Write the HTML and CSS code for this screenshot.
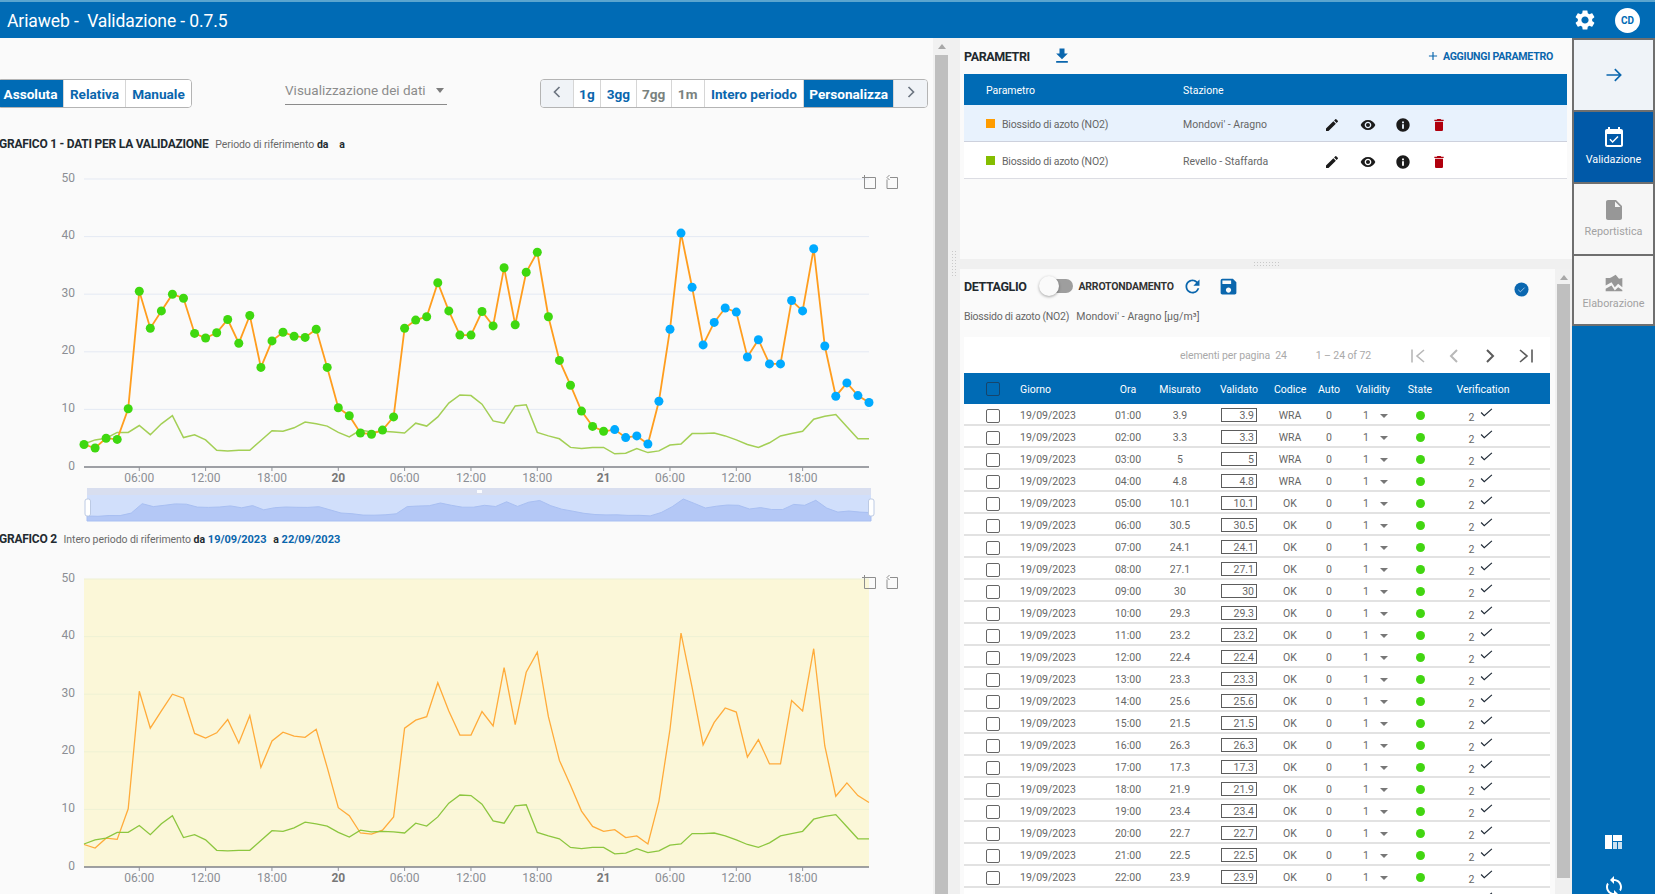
FILE: index.html
```html
<!DOCTYPE html>
<html lang="it">
<head>
<meta charset="utf-8">
<title>Ariaweb - Validazione</title>
<link rel="stylesheet" href="styles.css">
</head>
<body>
<svg class="sprite" aria-hidden="true">
  <symbol id="i-gear" viewBox="0 0 24 24"><path d="M19.14 12.94c.04-.3.06-.61.06-.94 0-.32-.02-.64-.07-.94l2.03-1.58c.18-.14.23-.41.12-.61l-1.92-3.32c-.12-.22-.37-.29-.59-.22l-2.39.96c-.5-.38-1.03-.7-1.62-.94l-.36-2.54c-.04-.24-.24-.41-.48-.41h-3.84c-.24 0-.43.17-.47.41l-.36 2.54c-.59.24-1.13.57-1.62.94l-2.39-.96c-.22-.08-.47 0-.59.22L2.74 8.87c-.12.21-.08.47.12.61l2.03 1.58c-.05.3-.09.63-.09.94s.02.64.07.94l-2.03 1.58c-.18.14-.23.41-.12.61l1.92 3.32c.12.22.37.29.59.22l2.39-.96c.5.38 1.03.7 1.62.94l.36 2.54c.05.24.24.41.48.41h3.84c.24 0 .44-.17.47-.41l.36-2.54c.59-.24 1.13-.56 1.62-.94l2.39.96c.22.08.47 0 .59-.22l1.92-3.32c.12-.22.07-.47-.12-.61l-2.01-1.58zM12 15.6c-1.98 0-3.6-1.62-3.6-3.6s1.62-3.6 3.6-3.6 3.6 1.62 3.6 3.6-1.62 3.6-3.6 3.6z"/></symbol>
  <symbol id="i-edit" viewBox="0 0 24 24"><path d="M3 17.25V21h3.75L17.81 9.94l-3.75-3.75L3 17.25zM20.71 7.04a1 1 0 0 0 0-1.41l-2.34-2.34a1 1 0 0 0-1.41 0l-1.83 1.83 3.75 3.75 1.83-1.83z"/></symbol>
  <symbol id="i-eye" viewBox="0 0 24 24"><path d="M12 4.5C7 4.5 2.73 7.61 1 12c1.73 4.39 6 7.5 11 7.5s9.27-3.11 11-7.5c-1.73-4.39-6-7.5-11-7.5zM12 17c-2.76 0-5-2.24-5-5s2.24-5 5-5 5 2.24 5 5-2.24 5-5 5zm0-8c-1.66 0-3 1.34-3 3s1.34 3 3 3 3-1.34 3-3-1.34-3-3-3z"/></symbol>
  <symbol id="i-info" viewBox="0 0 24 24"><path d="M12 2C6.48 2 2 6.48 2 12s4.48 10 10 10 10-4.48 10-10S17.52 2 12 2zm1.4 15.5h-2.8v-6.6h2.8v6.6zm0-8.2h-2.8V6.6h2.8v2.7z"/></symbol>
  <symbol id="i-trash" viewBox="0 0 24 24"><path d="M6 19c0 1.1.9 2 2 2h8c1.1 0 2-.9 2-2V7H6v12zM19 4h-3.5l-1-1h-5l-1 1H5v2h14V4z"/></symbol>
  <symbol id="i-download" viewBox="0 0 24 24"><path d="M19 9h-4V3H9v6H5l7 7 7-7zM5 18v2h14v-2H5z"/></symbol>
  <symbol id="i-add" viewBox="0 0 24 24"><path d="M19 13h-6v6h-2v-6H5v-2h6V5h2v6h6v2z"/></symbol>
  <symbol id="i-arrow" viewBox="0 0 24 24"><path d="M3 12h17M13 5l7 7-7 7" fill="none" stroke="currentColor" stroke-width="2"/></symbol>
  <symbol id="i-event" viewBox="0 0 24 24"><path d="M16.53 11.06L15.47 10l-4.88 4.88-2.12-2.12-1.06 1.06L10.59 17l5.94-5.94zM19 3h-1V1h-2v2H8V1H6v2H5c-1.11 0-1.99.9-1.99 2L3 19c0 1.1.89 2 2 2h14c1.1 0 2-.9 2-2V5c0-1.1-.9-2-2-2zm0 16H5V8h14v11z"/></symbol>
  <symbol id="i-doc" viewBox="0 0 24 24"><path d="M6 2c-1.1 0-1.99.9-1.99 2L4 20c0 1.1.89 2 2 2h12c1.1 0 2-.9 2-2V8l-6-6H6zm7 7V3.5L18.5 9H13z"/></symbol>
  <symbol id="i-area" viewBox="0 0 24 24"><path d="M2 6h5l2-1 5-3 4 5 4-1v11l-5-4-4 4-4-6-7 4zM2 19l7-4 4 6 4-4 5 3.500V22H2z"/></symbol>
  <symbol id="i-refresh" viewBox="0 0 24 24"><path d="M17.65 6.35A7.958 7.958 0 0 0 12 4c-4.42 0-7.99 3.58-7.99 8s3.57 8 7.99 8c3.73 0 6.84-2.55 7.73-6h-2.08A5.99 5.99 0 0 1 12 18c-3.31 0-6-2.69-6-6s2.69-6 6-6c1.66 0 3.14.69 4.22 1.78L13 11h7V4l-2.35 2.35z"/></symbol>
  <symbol id="i-save" viewBox="0 0 24 24"><path d="M17 3H5a2 2 0 0 0-2 2v14c0 1.1.9 2 2 2h14c1.100 0 2-.9 2-2V7l-4-4zm-5 16c-1.660 0-3-1.340-3-3s1.340-3 3-3 3 1.340 3 3-1.340 3-3 3zm3-10H5V5h10v4z"/></symbol>
  <symbol id="i-verified" viewBox="0 0 16 16"><circle cx="8" cy="8" r="7.500" fill="#0a67b0"/><path d="M4.500 8.300l2.300 2.200 4.500-4.500" fill="none" stroke="#9fc5e6" stroke-width="1"/></symbol>
  <symbol id="i-left" viewBox="0 0 12 16"><path d="M9 2L3 8l6 6" fill="none" stroke="currentColor" stroke-width="2"/></symbol>
  <symbol id="i-right" viewBox="0 0 12 16"><path d="M3 2l6 6-6 6" fill="none" stroke="currentColor" stroke-width="2"/></symbol>
  <symbol id="i-first" viewBox="0 0 16 16"><path d="M2 1.500v13M14 2L7 8l7 6" fill="none" stroke="currentColor" stroke-width="1.600"/></symbol>
  <symbol id="i-last" viewBox="0 0 16 16"><path d="M14 1.500v13M2 2l7 6-7 6" fill="none" stroke="currentColor" stroke-width="1.600"/></symbol>
  <symbol id="i-quilt" viewBox="0 0 17 14"><path d="M0 0h7v14H0zM8 0h9v6H8z"/><path d="M8 7h4v7H8zM13 7h4v7h-4z" opacity=".8"/></symbol>
  <symbol id="i-sync" viewBox="0 0 24 24"><path d="M12 4V1L8 5l4 4V6c3.310 0 6 2.690 6 6 0 1.010-.25 1.970-.7 2.800l1.460 1.460A7.930 7.930 0 0 0 20 12c0-4.420-3.580-8-8-8zm0 14c-3.310 0-6-2.690-6-6 0-1.010.25-1.970.7-2.800L5.240 7.740A7.930 7.930 0 0 0 4 12c0 4.420 3.580 8 8 8v3l4-4-4-4v3z"/></symbol>
  <symbol id="i-check" viewBox="0 0 14 10"><path d="M1 5l3.500 3.500L13 1" fill="none" stroke="#1f2a36" stroke-width="1.300"/></symbol>
</svg>

<div class="app">
  <header class="topbar">
    <div class="brand">Ariaweb -&nbsp; Validazione - 0.7.5</div>
    <div class="top-actions">
      <svg class="gear"><use href="#i-gear"/></svg>
      <div class="avatar">CD</div>
    </div>
  </header>

  <div class="workspace">
    <main class="charts-pane">
      <div class="toolbar">
        <div class="seg seg-mode">
          <button class="seg-btn is-active mode-a">Assoluta</button>
          <button class="seg-btn mode-b">Relativa</button>
          <button class="seg-btn mode-c">Manuale</button>
        </div>
        <div class="select"><span>Visualizzazione dei dati</span><i class="caret"></i></div>
        <div class="seg seg-range">
          <button class="seg-btn nav-btn"><svg class="nav-ico"><use href="#i-left"/></svg></button>
          <button class="seg-btn r-1g">1g</button>
          <button class="seg-btn r-3g">3gg</button>
          <button class="seg-btn r-7g is-muted">7gg</button>
          <button class="seg-btn r-1m is-muted">1m</button>
          <button class="seg-btn r-all">Intero periodo</button>
          <button class="seg-btn is-active r-custom">Personalizza</button>
          <button class="seg-btn nav-btn"><svg class="nav-ico"><use href="#i-right"/></svg></button>
        </div>
      </div>

      <h2 class="chart-title title-one">GRAFICO 1 - DATI PER LA VALIDAZIONE <small>Periodo di riferimento</small> <b>da</b> <b class="to-a">a</b></h2>
      <svg class="chart chart-one" id="chart1" viewBox="0 160 933 371"></svg>

      <h2 class="chart-title">GRAFICO 2 <small>Intero periodo di riferimento</small> <b>da</b> <b class="date">19/09/2023</b> <b class="to-b">a</b> <b class="date">22/09/2023</b></h2>
      <svg class="chart chart-two" id="chart2" viewBox="0 547 933 347"></svg>
    </main>

    <div class="scrollbar scrollbar-left"><i class="scroll-up"></i><i class="scroll-thumb"></i></div>
    <div class="splitter-v"><i class="dots-v"></i></div>

    <div class="right-pane">
      <section class="params">
        <div class="params-head">
          <h2 class="panel-title">PARAMETRI</h2>
          <svg class="ico-download"><use href="#i-download"/></svg>
          <a class="add-link"><svg class="ico-add"><use href="#i-add"/></svg>AGGIUNGI PARAMETRO</a>
        </div>
        <table class="param-table">
          <colgroup><col class="pc-1"><col class="pc-2"><col class="pc-i"><col class="pc-i"><col class="pc-i"><col class="pc-i"><col></colgroup>
          <thead><tr><th>Parametro</th><th>Stazione</th><th></th><th></th><th></th><th></th><th></th></tr></thead>
          <tbody>
            <tr class="is-selected">
              <td><i class="swatch swatch-orange"></i>Biossido di azoto (NO2)</td><td>Mondovi' - Aragno</td>
              <td><svg class="act"><use href="#i-edit"/></svg></td><td><svg class="act"><use href="#i-eye"/></svg></td><td><svg class="act"><use href="#i-info"/></svg></td><td><svg class="act act-del"><use href="#i-trash"/></svg></td><td></td>
            </tr>
            <tr>
              <td><i class="swatch swatch-green"></i>Biossido di azoto (NO2)</td><td>Revello - Staffarda</td>
              <td><svg class="act"><use href="#i-edit"/></svg></td><td><svg class="act"><use href="#i-eye"/></svg></td><td><svg class="act"><use href="#i-info"/></svg></td><td><svg class="act act-del"><use href="#i-trash"/></svg></td><td></td>
            </tr>
          </tbody>
        </table>
      </section>

      <div class="splitter-h"><i class="dots-h"></i></div>

      <div class="detail-wrap">
        <section class="detail">
          <div class="detail-head">
            <h2 class="panel-title">DETTAGLIO</h2>
            <span class="toggle"><i class="toggle-knob"></i></span>
            <span class="toggle-label">ARROTONDAMENTO</span>
            <svg class="ico-refresh"><use href="#i-refresh"/></svg>
            <svg class="ico-save"><use href="#i-save"/></svg>
            <svg class="ico-verified"><use href="#i-verified"/></svg>
          </div>
          <p class="detail-sub"><span class="sub-param">Biossido di azoto (NO2)</span><span class="sub-station">Mondovi' - Aragno [µg/m³]</span></p>
          <div class="paginator">
            <span class="pg-size">elementi per pagina&nbsp; 24</span>
            <span class="pg-range">1 – 24 of 72</span>
            <svg class="pg-ico pg-off"><use href="#i-first"/></svg>
            <svg class="pg-ico pg-off"><use href="#i-left"/></svg>
            <svg class="pg-ico"><use href="#i-right"/></svg>
            <svg class="pg-ico"><use href="#i-last"/></svg>
          </div>
          <table class="data-table">
            <colgroup><col class="c1"><col class="c2"><col class="c3"><col class="c4"><col class="c5"><col class="c6"><col class="c7"><col class="c8"><col class="c9"><col class="c10"><col></colgroup>
            <thead>
              <tr><th class="chk-cell"><i class="chk chk-head"></i></th><th class="left">Giorno</th><th>Ora</th><th>Misurato</th><th>Validato</th><th>Codice</th><th>Auto</th><th>Validity</th><th>State</th><th>Verification</th><th></th></tr>
            </thead>
            <tbody id="rows"></tbody>
          </table>
        </section>
        <div class="scrollbar scrollbar-right"><i class="scroll-up"></i><i class="scroll-thumb"></i></div>
      </div>
    </div>

    <nav class="sidebar">
      <div class="tiles">
        <a class="tile tile-nav"><svg class="tile-ico ico-arrow"><use href="#i-arrow"/></svg></a>
        <a class="tile is-active"><svg class="tile-ico"><use href="#i-event"/></svg><span>Validazione</span></a>
        <a class="tile"><svg class="tile-ico"><use href="#i-doc"/></svg><span>Reportistica</span></a>
        <a class="tile tile-last"><svg class="tile-ico ico-area"><use href="#i-area"/></svg><span>Elaborazione</span></a>
      </div>
      <svg class="side-ico side-quilt"><use href="#i-quilt"/></svg>
      <svg class="side-ico side-sync"><use href="#i-sync"/></svg>
    </nav>
  </div>
</div>
<script src="app.js"></script>
</body>
</html>
```
FILE: styles.css
```css
* { box-sizing: border-box; }
html, body { margin: 0; height: 100%; overflow: hidden; background: #fff; }
body { font-family: Roboto, "Liberation Sans", sans-serif; color: #555; font-size: 11px; }
button { font: inherit; }
h2, p { margin: 0; }
.sprite { display: none; }

.app { width: 1655px; height: 894px; display: flex; flex-direction: column; overflow: hidden; }

.topbar { height: 38px; flex: none; background: #006bb5; border-top: 2px solid #5aa5cf; display: flex; align-items: center; justify-content: space-between; color: #fff; padding: 0 15px 0 7px; }
.brand { font-size: 17.5px; letter-spacing: -.1px; margin-top: 1px; }
.top-actions { display: flex; align-items: center; gap: 18px; }
.gear { width: 24px; height: 24px; fill: #fff; }
.avatar { width: 25px; height: 25px; border-radius: 50%; background: #fff; color: #006bb5; font-size: 10px; font-weight: 700; display: flex; align-items: center; justify-content: center; }

.workspace { flex: 1; display: flex; min-height: 0; background: #f0f0f0; }

.charts-pane { width: 933px; flex: none; background: #fafafa; padding-top: 41px; overflow: hidden; }
.toolbar { display: flex; justify-content: space-between; align-items: flex-start; width: 928px; height: 29px; }
.seg { display: flex; height: 29px; border: 1px solid #b4b4b4; border-radius: 4px; overflow: hidden; background: #fff; }
.seg-mode { margin-left: -3px; width: 195px; }
.seg-range { width: 388px; }
.seg-btn { border: 0; border-right: 1px solid #d6d6d6; background: #fff; color: #0a66ad; font-weight: 700; font-size: 13.600px; padding: 0; display: flex; align-items: center; justify-content: center; }
.seg-btn:last-child { border-right: 0; }
.seg-btn.is-active { background: #006bb5; color: #fff; }
.seg-btn.is-muted { color: #7a827e; }
.mode-a { width: 66px; } .mode-b { width: 62px; } .mode-c { flex: 1; }
.nav-btn { width: 33px; background: #f0f3f7; color: #6c7580; }
.nav-ico { width: 10px; height: 14px; fill: none; margin-bottom: 3px; }
.r-1g { width: 27px; } .r-3g { width: 36px; } .r-7g { width: 35px; } .r-1m { width: 33px; } .r-all { width: 100px; } .r-custom { width: 90px; }

.select { width: 162px; height: 26px; border-bottom: 1px solid #8b8b8b; color: #8c8c8c; font-size: 13.500px; display: flex; justify-content: space-between; align-items: center; padding: 0 3px 3px 0; }
.caret { width: 0; height: 0; border-left: 4px solid transparent; border-right: 4px solid transparent; border-top: 5px solid #7d7d7d; }

.chart-title { height: 16px; overflow: hidden; font-size: 12px; font-weight: 700; color: #222a30; line-height: 16px; white-space: nowrap; margin-left: -1px; letter-spacing: -.24px; }
.title-one { margin-top: 28px; }
.chart-title small { font-size: 10.500px; font-weight: 400; color: #6a6a6a; margin-left: 4px; letter-spacing: -.1px; }
.chart-title b { font-size: 10.500px; font-weight: 700; letter-spacing: 0; }
.to-a { margin-left: 8px; }
.to-b { margin-left: 4px; }
.chart-title .date { color: #0a66ad; font-size: 11px; }

.chart { display: block; width: 933px; }
.chart-one { height: 371px; margin-top: 8px; }
.chart-two { height: 347px; }
.axis-y, .axis-x { font-size: 12px; fill: #8b8e94; font-family: Roboto, sans-serif; }
.axis-x.strong { font-weight: 700; fill: #777; }

.scrollbar { flex: none; width: 17px; background: #f1f1f1; position: relative; display: flex; flex-direction: column; align-items: center; }
.scroll-up { width: 0; height: 0; border-left: 4px solid transparent; border-right: 4px solid transparent; border-bottom: 5px solid #a8a8a8; margin-top: 6px; }
.scroll-thumb { width: 13px; flex: 1; background: #bfbfbf; margin-top: 6px; }
.splitter-v { width: 10px; flex: none; display: flex; align-items: center; }
.dots-v { display: block; width: 7px; height: 27px; margin: -405px 0 0 1px; background-image: radial-gradient(#c9c9c9 1px, transparent 1px); background-size: 3px 3px; }

.right-pane { width: 612px; flex: none; display: flex; flex-direction: column; min-height: 0; }
.params { height: 221px; flex: none; background: #fafafa; padding: 0 5px 0 4px; }
.params-head { height: 36px; display: flex; align-items: center; }
.panel-title { font-size: 12.500px; font-weight: 700; color: #22292f; letter-spacing: -.4px; }
.ico-download { width: 20px; height: 20px; fill: #0a66ad; margin-left: 22px; }
.add-link { margin-left: auto; margin-right: 14px; display: flex; align-items: center; color: #0a66ad; font-size: 10.600px; font-weight: 700; letter-spacing: -.27px; }
.ico-add { width: 14px; height: 14px; fill: #0a66ad; margin-right: 3px; }

.param-table { width: 603px; table-layout: fixed; border-collapse: separate; border-spacing: 0; font-size: 10.500px; }
.pc-1 { width: 219px; } .pc-2 { width: 131px; } .pc-i { width: 35.700px; }
.param-table th { height: 31px; background: #006bb5; color: #fff; font-weight: 400; text-align: left; padding: 2px 0 0 22px; }
.param-table th:nth-child(2), .param-table td:nth-child(2) { padding-left: 0; }
.param-table td { height: 37px; background: #fff; border-bottom: 1px solid #dcdde3; padding: 2px 0 0; color: #666; white-space: nowrap; }
.param-table td:first-child { padding-left: 22px; letter-spacing: -.2px; }
.param-table td:nth-child(n+3) { text-align: center; }
.param-table .is-selected td { background: #e8f2fd; border-bottom-color: #cdd1dd; }
.swatch { display: inline-block; width: 9px; height: 9px; margin-right: 7px; }
.swatch-orange { background: #ff9c00; }
.swatch-green { background: #84bd00; }
.act { width: 16px; height: 16px; fill: #1b1b1b; vertical-align: middle; position: relative; top: 1px; }
.act-del { fill: #b0000d; }

.splitter-h { height: 10px; flex: none; display: flex; justify-content: center; align-items: center; }
.dots-h { display: block; width: 27px; height: 6px; background-image: radial-gradient(#c9c9c9 1px, transparent 1px); background-size: 3px 3px; }

.detail-wrap { flex: 1; min-height: 0; display: flex; }
.detail { width: 595px; background: #fafafa; padding: 0 5px 0 4px; overflow: hidden; }
.detail-wrap .scrollbar { width: 17px; height: 611px; }
.scrollbar-right .scroll-thumb { margin-top: 4px; flex: none; height: 594px; }
.detail-head { height: 36px; display: flex; align-items: center; position: relative; padding-bottom: 2px; }
.toggle { width: 33px; height: 14px; background: #9e9e9e; border-radius: 7px; margin-left: 14px; position: relative; }
.toggle-knob { position: absolute; left: -1px; top: -3px; width: 20px; height: 20px; border-radius: 50%; background: #fafafa; box-shadow: 0 1px 3px rgba(0,0,0,.35); }
.toggle-label { font-size: 10.500px; font-weight: 700; color: #333; margin-left: 5px; letter-spacing: -.2px; }
.ico-refresh { width: 21px; height: 21px; fill: #0a66ad; margin-left: 8px; }
.ico-save { width: 21px; height: 21px; fill: #0a66ad; margin-left: 15px; }
.ico-verified { position: absolute; left: 550px; top: 13px; width: 15px; height: 15px; }
.detail-sub { height: 32px; line-height: 23px; font-size: 10.500px; color: #666; white-space: nowrap; }
.sub-param { letter-spacing: -.24px; }
.sub-station { letter-spacing: .08px; margin-left: 7px; }

.paginator { width: 586px; height: 36px; background: #fff; display: flex; align-items: center; color: #a9a9a9; font-size: 10.500px; padding-left: 216px; letter-spacing: -.1px; }
.pg-range { margin-left: 29px; width: 47px; white-space: nowrap; }
.pg-ico { width: 16px; height: 16px; fill: none; color: #5b5b5b; margin: 2px 0 0 20px; }
.pg-ico:nth-of-type(1) { margin-left: 47px; }
.pg-off { color: #b8b8b8; }

.data-table { width: 586px; table-layout: fixed; border-collapse: separate; border-spacing: 0; font-size: 10.500px; }
.c1 { width: 52px; } .c2 { width: 84px; } .c3 { width: 56px; } .c4 { width: 48px; } .c5 { width: 70px; } .c6 { width: 32px; } .c7 { width: 46px; } .c8 { width: 42px; } .c9 { width: 52px; } .c10 { width: 74px; }
.data-table th { height: 31px; background: #006bb5; color: #fff; font-weight: 400; text-align: center; padding: 1px 0 0; white-space: nowrap; }
.data-table th.left, .data-table td.left { text-align: left; padding-left: 4px; }
.data-table td { height: 22px; background: #fff; border-bottom: 2px solid #e2e2e2; text-align: center; padding: 2px 0 0; color: #666; white-space: nowrap; }
.data-table th.chk-cell, .data-table td.chk-cell { text-align: left; padding-left: 22px; }
.chk { display: block; width: 14px; height: 14px; border: 1px solid #666; border-radius: 2px; }
.chk-head { border-color: #16456b; }
.data-table td .chk { position: relative; top: 1px; }
.input { display: inline-block; width: 36px; height: 14px; line-height: 13px; border: 1px solid #5c5c5c; text-align: right; padding-right: 2px; vertical-align: middle; }
.dd { display: inline-block; position: relative; padding-right: 19px; margin-left: 5px; text-align: left; }
.dd::after { content: ""; position: absolute; right: 0; top: 5px; border-left: 4px solid transparent; border-right: 4px solid transparent; border-top: 4px solid #777; }
.dot { display: inline-block; width: 9px; height: 9px; border-radius: 50%; background: #42d611; vertical-align: middle; }
.verif { position: relative; top: 2px; margin-left: -4px; }
.tick { display: inline-block; width: 13px; height: 9px; margin-left: 6px; position: relative; top: -2px; vertical-align: baseline; }

.sidebar { width: 83px; flex: none; background: #006bb5; display: flex; flex-direction: column; align-items: center; overflow: hidden; }
.tiles { width: 83px; background: #6f6f6f; padding: 2px; display: flex; flex-direction: column; gap: 2px; }
.tile { height: 70px; background: #f6f6f6; color: #a2a2a2; font-size: 10.800px; display: flex; flex-direction: column; align-items: center; justify-content: flex-start; gap: 3px; padding-top: 14px; line-height: 14px; }
.tile-last { height: 68px; }
.tile-nav { background: #eff3f8; color: #0a66ad; justify-content: center; padding-top: 0; }
.tile.is-active { background: #0059a8; color: #fff; }
.tile-ico { width: 24px; height: 24px; fill: #979797; flex: none; }
.is-active .tile-ico { fill: #fff; }
.ico-arrow { color: #0a66ad; width: 20px; height: 20px; }
.ico-area { width: 20px; height: 20px; margin: 3px 0 1px; }
.side-ico { fill: #fff; flex: none; }
.side-quilt { width: 17px; height: 14px; margin-top: 509px; }
.side-sync { width: 24px; height: 24px; margin-top: 26px; }
```
FILE: app.js
```js
var S1 = [3.9,3.3,5,4.8,10.1,30.5,24.1,27.1,30,29.3,23.2,22.4,23.3,25.6,21.5,26.3,17.3,21.9,23.4,22.7,22.5,23.9,17.3,10.3,8.9,5.9,5.7,6.4,8.7,24.1,25.5,26.1,32,27.1,22.9,22.9,27,24.5,34.6,24.7,33.8,37.3,26.1,18.5,14.2,9.7,7.05,6.2,6.5,5.1,5.4,4,11.4,23.9,40.6,31.2,21.2,25.1,27.6,26.9,19.1,22.1,17.9,17.9,28.9,27.1,37.9,21,12.3,14.6,12.4,11.2];
var S2 = [4,4.7,5,6,6,7.2,5.6,7.5,8.9,5.1,5.6,4.7,2.9,2.8,2.9,2.9,4.6,6.3,6.2,6.8,7.8,7.5,7.1,6,5.2,6.4,6.1,6.2,6.1,5.9,7.6,7.1,8.7,11.1,12.5,12.4,10.9,8,7.6,10.6,10.8,6,5.4,4.9,3.4,3.2,3.4,3.4,2.3,2.4,3.2,2.5,2.8,3.8,4,5.8,5.8,5.9,5.4,4.7,3.9,3.4,4.2,5.4,5.8,6.2,8.3,8.8,9.1,7,4.9,4.9];
var LEFT = 84, STEP = 11.056;
var XL = [[5,'06:00'],[11,'12:00'],[17,'18:00'],[23,'20',1],[29,'06:00'],[35,'12:00'],[41,'18:00'],[47,'21',1],[53,'06:00'],[59,'12:00'],[65,'18:00']];

function px(i) { return LEFT + i * STEP; }
function pts(data, fy) {
  return data.map(function (v, i) { return px(i).toFixed(1) + ',' + fy(v).toFixed(1); }).join(' ');
}
function toolbox(top) {
  return '<g fill="none" stroke="#8e8e8e" stroke-width="1">' +
    '<path d="M864.500 ' + top + 'v13.500h11v-11h-13.500"/>' +
    '<path d="M890 ' + (top + 2.500) + 'h7.500v11h-10.500v-9M889.500 ' + top + 'l-2.500 2.500 2.500 2.500"/></g>';
}
function frame(base, grid) {
  var out = '';
  [10, 20, 30, 40, 50].forEach(function (v) {
    var y = base - v * 5.76;
    out += '<line x1="84" x2="869" y1="' + y + '" y2="' + y + '" stroke="' + grid + '"/>';
  });
  [0, 10, 20, 30, 40, 50].forEach(function (v) {
    out += '<text class="axis-y" x="75" y="' + (base - v * 5.76 + 2.5) + '" text-anchor="end">' + v + '</text>';
  });
  out += '<line x1="84" x2="869" y1="' + base + '" y2="' + base + '" stroke="#7f8288" stroke-width="1.500"/>';
  XL.forEach(function (l) {
    var x = px(l[0]);
    out += '<line x1="' + x + '" x2="' + x + '" y1="' + base + '" y2="' + (base + 4) + '" stroke="#8e9197"/>';
    out += '<text class="axis-x' + (l[2] ? ' strong' : '') + '" x="' + x + '" y="' + (base + 15) + '" text-anchor="middle">' + l[1] + '</text>';
  });
  return out;
}

(function chart1() {
  var base = 467, fy = function (v) { return base - v * 5.76; };
  var o = frame(base, '#e4e9f3') + toolbox(175);
  o += '<polyline fill="none" stroke="#a3cf55" stroke-width="1.500" points="' + pts(S2, fy) + '"/>';
  o += '<polyline fill="none" stroke="#ff9d1e" stroke-width="1.800" points="' + pts(S1, fy) + '"/>';
  S1.forEach(function (v, i) {
    o += '<circle cx="' + px(i).toFixed(1) + '" cy="' + fy(v).toFixed(1) + '" r="4.500" fill="' + (i >= 48 ? '#00aaff' : '#3fd80f') + '"/>';
  });
  var fm = function (v) { return 517.800 - v * 0.463; };
  var x0 = 87, x1 = 871, dx = (x1 - x0) / 71;
  var area = S1.map(function (v, i) { return (x0 + i * dx).toFixed(1) + ',' + fm(v).toFixed(1); }).join(' ');
  o += '<rect x="87" y="488" width="784" height="7" fill="#d8deef"/>';
  o += '<rect x="87" y="495" width="784" height="26" fill="#d1dffb"/>';
  o += '<polygon fill="#b4c8f6" stroke="#a8bff2" points="87,521 ' + area + ' 871,521"/>';
  o += '<rect x="477" y="490" width="5" height="3" fill="#fff" opacity=".9"/>';
  o += '<rect x="85" y="499" width="5.500" height="17" rx="2" fill="#fff" stroke="#bccae4"/>';
  o += '<rect x="868.500" y="499" width="5.500" height="17" rx="2" fill="#fff" stroke="#bccae4"/>';
  document.getElementById('chart1').innerHTML = o;
})();

(function chart2() {
  var base = 867, fy = function (v) { return base - v * 5.76; };
  var o = '<rect x="84" y="579" width="785" height="288" fill="#fbf7d8"/>';
  o += frame(base, '#eef1d4') + toolbox(575);
  o += '<polyline fill="none" stroke="#ffab3a" stroke-width="1.300" points="' + pts(S1, fy) + '"/>';
  o += '<polyline fill="none" stroke="#8cc63f" stroke-width="1.300" points="' + pts(S2, fy) + '"/>';
  document.getElementById('chart2').innerHTML = o;
})();

(function table() {
  var html = '';
  for (var i = 0; i < 22; i++) {
    var h = (i + 1 < 10 ? '0' : '') + (i + 1) + ':00';
    var v = S1[i];
    html += '<tr><td class="chk-cell"><i class="chk"></i></td><td class="left">19/09/2023</td><td>' + h + '</td><td>' + v + '</td>' +
      '<td><span class="input">' + v + '</span></td><td>' + (i < 4 ? 'WRA' : 'OK') + '</td><td>0</td><td><span class="dd">1</span></td>' +
      '<td><i class="dot"></i></td><td><span class="verif">2</span><svg class="tick"><use href="#i-check"/></svg></td><td></td></tr>';
  }
  html += '<tr><td></td><td></td><td></td><td></td><td></td><td></td><td></td><td></td><td></td><td class="tick-only"><svg class="tick"><use href="#i-check"/></svg></td><td></td></tr>';
  document.getElementById('rows').innerHTML = html;
})();
```
